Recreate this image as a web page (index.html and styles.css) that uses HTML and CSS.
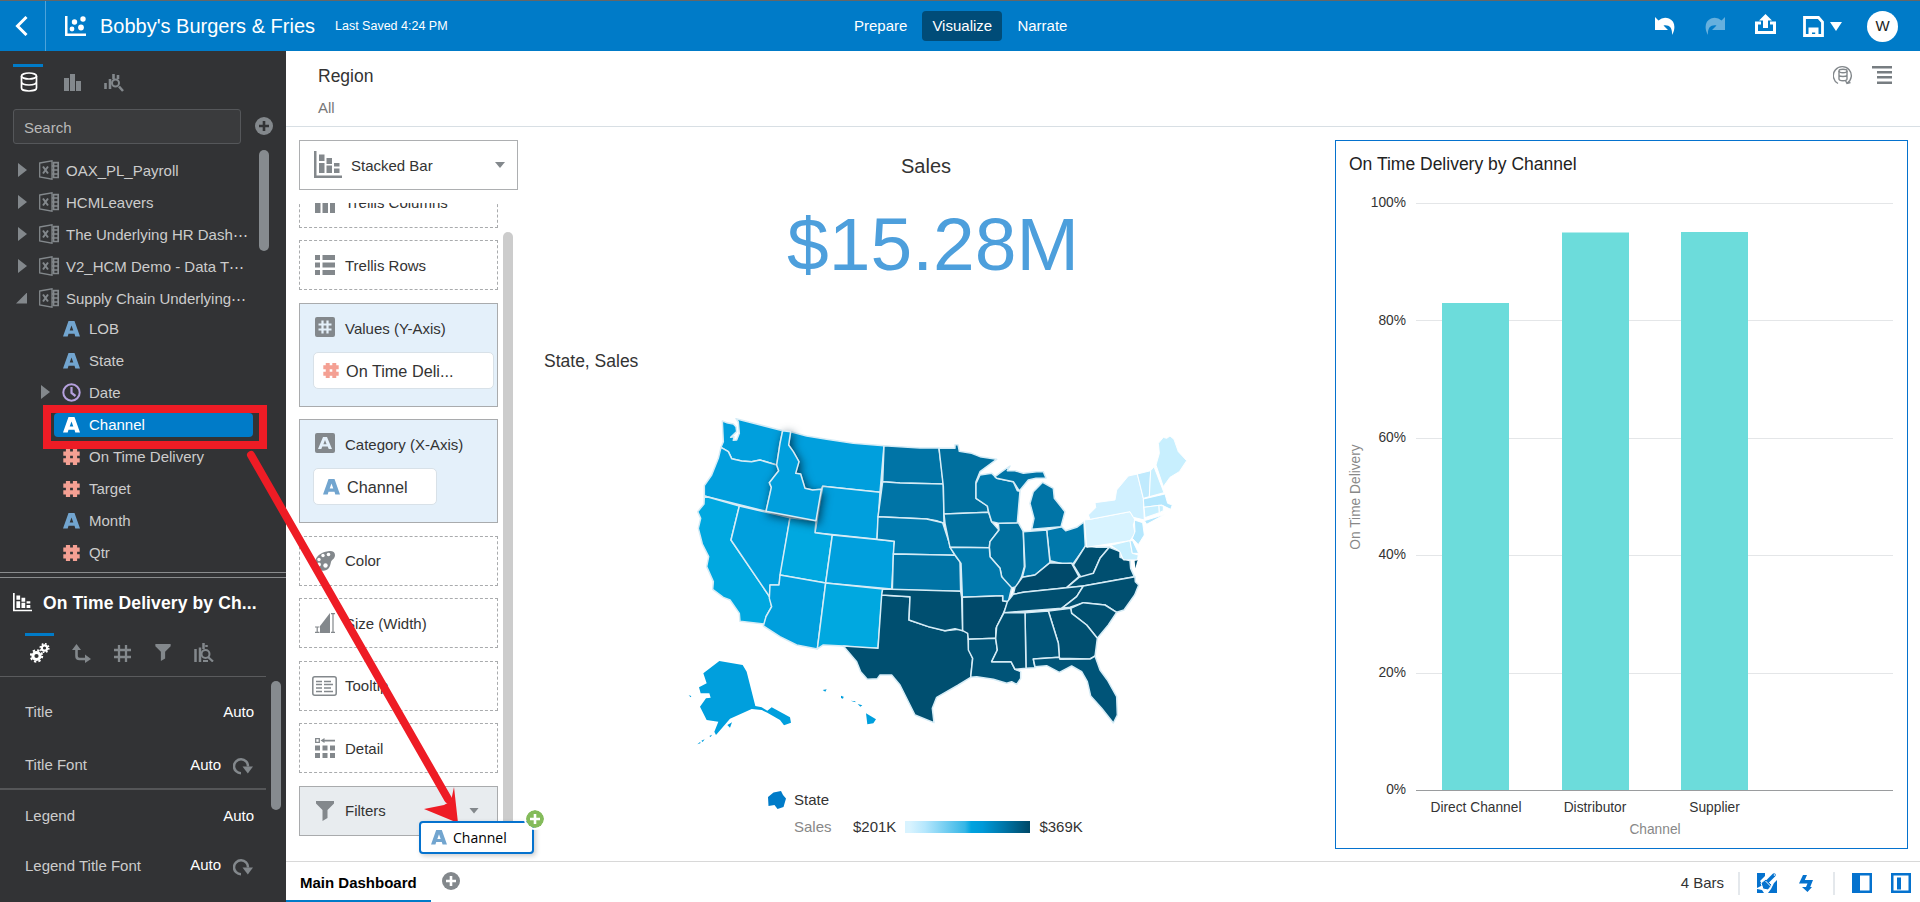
FILE: index.html
```
<!DOCTYPE html>
<html lang="en">
<head>
<meta charset="utf-8">
<title>Bobby's Burgers &amp; Fries</title>
<link rel="stylesheet" href="styles.css">
</head>
<body>
<svg class="defs" width="0" height="0" aria-hidden="true">
  <symbol id="excel" viewBox="0 0 20 20"><path d="M.7 3 13 .8v18.4L.7 17z" fill="none" stroke="#83888c" stroke-width="1.3"/><path d="M4 6.500l5 7M9 6.500l-5 7" stroke="#83888c" stroke-width="2"/><path d="M13.500 2.700h5.700v14.800h-5.700M13 6h6M13 10h6M13 14h6M14.500 2.500v15" fill="none" stroke="#83888c" stroke-width="1.700"/></symbol>
  <symbol id="attr" viewBox="0 0 17 16"><path fill-rule="evenodd" fill="currentColor" d="M5.500 0h6L17 15.500h-4.700l-.8-2.700h-6l-.8 2.700H0zM8.500 4.500 6.700 9.600h3.600z"/></symbol>
  <symbol id="hash" viewBox="0 0 17 16"><path stroke="currentColor" stroke-width="4.200" d="M5 0v16M12 0v16M.3 4.600h16.400M.3 11.400h16.400"/></symbol>
  <symbol id="stack" viewBox="0 0 28 28"><path fill="currentColor" d="M0 0h2.500v24.500H28V27H0zM5 3.500h5.500V10H5zM5 12h5.500v10H5zM12.500 7h5.500v6h-5.500zM12.500 14.500h5.500V22h-5.500zM20 12h5.500v3.500H20zM20 17.500h5.500V22H20z"/></symbol>
  <symbol id="plus" viewBox="0 0 18 18"><circle cx="9" cy="9" r="9" fill="currentColor"/><path class="plus-mark" d="M9 4v10M4 9h10" stroke-width="2.600"/></symbol>
  <symbol id="funnel" viewBox="0 0 18 20"><path fill="currentColor" d="M0 0h18v2.500L11.500 9v8L6.500 20V9L0 2.500z"/></symbol>
  <symbol id="redo-circle" viewBox="0 0 20 17"><path d="M8 15.300A7 7 0 1 1 15 8.500" fill="none" stroke="#83888c" stroke-width="2.500"/><path d="M9.500 8.500H20L14.800 15.500z" fill="#83888c"/></symbol>
  <symbol id="insight" viewBox="0 0 20 19"><path d="M1.500 6v13M6 4.500V19M9.500 0v6M12.500 2v2M9 18.200h5" stroke="currentColor" stroke-width="2.500"/><circle cx="11.500" cy="11" r="4" fill="none" stroke="currentColor" stroke-width="2"/><path d="m14 14 5 4.500" stroke="currentColor" stroke-width="2.300"/></symbol>
</svg>

<header class="topbar">
  <div class="back"><svg width="14" height="20" viewBox="0 0 14 20"><path d="M11.500 1 2.500 10l9 9" fill="none" stroke="#fff" stroke-width="3"/></svg></div>
  <svg class="logo" width="21" height="20" viewBox="0 0 21 20" fill="#fff"><path d="M0 0h2.500v17.500H21V20H0z"/><circle cx="7" cy="13" r="2.400"/><circle cx="9.500" cy="6" r="2.700"/><circle cx="16" cy="11.500" r="2.900"/><circle cx="18" cy="3" r="2.700"/></svg>
  <h1 class="project">Bobby's Burgers &amp; Fries</h1>
  <span class="saved">Last Saved 4:24 PM</span>
  <nav class="modes"><a class="mode">Prepare</a><a class="mode active">Visualize</a><a class="mode">Narrate</a></nav>
  <div class="actions">
    <svg class="undo" width="20" height="18" viewBox="0 0 20 18"><path d="M0 0 3.500 3.500Q8-.5 14 1.500C20 4 21 11 17 18 17.500 11 14.500 7.500 8.500 8.500L13 13H0z" fill="#fff"/></svg>
    <svg class="redo" width="20" height="18" viewBox="0 0 20 18"><path d="M20 0 16.500 3.500Q12-.5 6 1.500C0 4-1 11 3 18 2.500 11 5.500 7.500 11.500 8.500L7 13h13z" fill="#66b0de"/></svg>
    <svg class="export" width="21" height="20" viewBox="0 0 21 20"><path d="M6 9H1.500v9.500h18V9H15" fill="none" stroke="#fff" stroke-width="3"/><path d="M10.500 0 17 6.500h-4V14H8V6.500H4z" fill="#fff"/></svg>
    <svg class="save" width="21" height="21" viewBox="0 0 21 21"><path d="M1.500 1.500h14l4 4.500v13.500h-18z" fill="none" stroke="#fff" stroke-width="2.800"/><path d="M5.500 11.500h10V20h-3.300v-3.500H9V20H5.500z" fill="#fff"/></svg>
    <svg class="caret" width="12" height="9" viewBox="0 0 12 9"><path d="M0 0h12L6 9z" fill="#fff"/></svg>
    <span class="avatar">W</span>
  </div>
</header>

<div class="shell">
  <aside class="side">
    <div class="side-tabs">
      <span class="side-tab on"><svg width="18" height="20" viewBox="0 0 18 20" fill="none" stroke="#fff" stroke-width="1.700"><ellipse cx="9" cy="4" rx="7.500" ry="3"/><path d="M1.500 4v12c0 1.700 3.400 3 7.500 3s7.500-1.300 7.500-3V4M1.500 9.500c0 2.400 3.400 3.500 7.500 3.500s7.500-1.100 7.500-3.500"/></svg></span>
      <svg class="tab-bars" width="17" height="17" viewBox="0 0 17 17"><path fill="#83888c" d="M0 4h5v13H0zM6 0h5v17H6zM12 7h5v10h-5z"/></svg>
      <svg class="tab-insight" width="20" height="18" viewBox="0 0 20 18" fill="none" stroke="#83888c"><path stroke-width="2.600" d="M1.500 9v6M6 5v10M9.500 0v5M14 1v4M15 12.500l4 4.500"/><circle cx="11.500" cy="9" r="3.500" stroke-width="2"/></svg>
    </div>
    <div class="search-row"><div class="search">Search</div><svg class="add-dark" width="18" height="18"><use href="#plus"/></svg></div>
    <div class="tree-wrap">
      <div class="tree">
        <div class="row"><i class="tri"></i><svg width="20" height="20"><use href="#excel"/></svg><span>OAX_PL_Payroll</span></div>
        <div class="row"><i class="tri"></i><svg width="20" height="20"><use href="#excel"/></svg><span>HCMLeavers</span></div>
        <div class="row"><i class="tri"></i><svg width="20" height="20"><use href="#excel"/></svg><span>The Underlying HR Dash⋯</span></div>
        <div class="row"><i class="tri"></i><svg width="20" height="20"><use href="#excel"/></svg><span>V2_HCM Demo - Data T⋯</span></div>
        <div class="row"><i class="tri open"></i><svg width="20" height="20"><use href="#excel"/></svg><span>Supply Chain Underlying⋯</span></div>
        <div class="kids">
          <div class="kid"><svg class="blue" width="17" height="16"><use href="#attr"/></svg><span>LOB</span></div>
          <div class="kid"><svg class="blue" width="17" height="16"><use href="#attr"/></svg><span>State</span></div>
          <div class="kid date"><i class="tri"></i><svg width="19" height="19" viewBox="0 0 19 19" fill="none" stroke="#b5a1de" stroke-width="2"><circle cx="9.500" cy="9.500" r="8.200"/><path d="M9.500 4v6l4 3" stroke-width="2.200"/></svg><span>Date</span></div>
          <div class="kid picked"><svg width="17" height="16"><use href="#attr"/></svg><span>Channel</span></div>
          <div class="kid"><svg class="pink" width="17" height="16"><use href="#hash"/></svg><span>On Time Delivery</span></div>
          <div class="kid"><svg class="pink" width="17" height="16"><use href="#hash"/></svg><span>Target</span></div>
          <div class="kid"><svg class="blue" width="17" height="16"><use href="#attr"/></svg><span>Month</span></div>
          <div class="kid"><svg class="pink" width="17" height="16"><use href="#hash"/></svg><span>Qtr</span></div>
        </div>
      </div>
      <div class="thumb tree-thumb"></div>
    </div>
    <div class="splitter"></div>
    <div class="viz-name"><svg width="19" height="19"><use href="#stack"/></svg><b>On Time Delivery by Ch...</b></div>
    <div class="prop-tabs">
      <span class="prop-tab on"><svg width="20" height="20" viewBox="0 0 20 20" fill="none" stroke="#fff"><circle cx="6.500" cy="13" r="3.600" stroke-width="3"/><circle cx="6.500" cy="13" r="5.700" stroke-width="2" stroke-dasharray="2.300 2.180"/><circle cx="14.500" cy="5" r="2.700" stroke-width="2.200"/><circle cx="14.500" cy="5" r="4.300" stroke-width="1.600" stroke-dasharray="1.700 1.670"/></svg></span>
      <svg class="p-axis" width="19" height="19" viewBox="0 0 19 19"><path d="M4.500 4v8q0 3 3 3H14" fill="none" stroke="#83888c" stroke-width="2.600"/><path d="M0 6 4.500 0 9 6zM13 10.500l6 4.500-6 4z" fill="#83888c"/></svg>
      <svg class="p-hash" width="17" height="17" viewBox="0 0 17 17"><path d="M5 0v17M12 0v17M0 5h17M0 12h17" stroke="#83888c" stroke-width="2.300"/></svg>
      <svg class="p-funnel" width="16" height="17"><use href="#funnel"/></svg>
      <svg class="p-insight" width="20" height="19"><use href="#insight"/></svg>
    </div>
    <div class="props-wrap">
      <div class="props">
        <div class="prop p1"><span>Title</span><em>Auto</em></div>
        <div class="prop p2"><span>Title Font</span><em>Auto</em><svg width="20" height="17"><use href="#redo-circle"/></svg></div>
        <div class="prop p3"><span>Legend</span><em>Auto</em></div>
        <div class="prop p4"><span>Legend Title Font</span><em>Auto</em><svg width="20" height="17"><use href="#redo-circle"/></svg></div>
      </div>
      <div class="thumb prop-thumb"></div>
    </div>
  </aside>

  <main class="main">
    <section class="filterbar">
      <div><div class="f-name">Region</div><div class="f-val">All</div></div>
      <div class="f-icons">
        <svg width="20" height="20" viewBox="0 0 20 20" fill="none" stroke="#83888c" stroke-width="1.400"><path d="M5 18.500a9 9 0 1 1 9-.2"/><path d="M12.500 15.500 14 18.500l3.500-1"/><ellipse cx="10" cy="6" rx="4" ry="1.700"/><path d="M6 6v8c0 2.300 8 2.300 8 0V6M6 10c0 2 8 2 8 0"/></svg>
        <svg width="20" height="18" viewBox="0 0 20 18"><path fill="#777d81" d="M0 0h20v2.500H0zM5 5h15v2.500H5zM5 10h15v2.500H5zM5 15.500h15V18H5z"/></svg>
      </div>
    </section>

    <section class="work">
      <div class="grammar">
        <div class="picker"><svg width="28" height="28"><use href="#stack"/></svg><span>Stacked Bar</span><i class="down"></i></div>
        <div class="zones">
          <div class="zone-list">
            <div class="zone"><svg class="cols" width="20" height="20" viewBox="0 0 20 20"><path fill="#83888c" d="M0 0h5.500v5H0zM7.500 0H13v5H7.500zM15 0h5v5h-5zM0 7h5.500v13H0zM7.500 7H13v13H7.500zM15 7h5v13h-5z"/></svg><span>Trellis Columns</span></div>
            <div class="zone"><svg width="20" height="20" viewBox="0 0 20 20"><path fill="#83888c" d="M0 0h5v5H0zM7.500 0H20v5H7.500zM0 7.500h5v5H0zM7.500 7.500H20v5H7.500zM0 15h5v5H0zM7.500 15H20v5H7.500z"/></svg><span>Trellis Rows</span></div>
            <div class="zone full"><div class="z-head"><svg width="20" height="20" viewBox="0 0 20 20"><rect width="20" height="20" rx="2" fill="#83888c"/><path d="M7.500 3.500v13M12.500 3.500v13M3.500 7.500h13M3.500 12.500h13" stroke="#e4f0fa" stroke-width="2.200"/></svg><span>Values (Y-Axis)</span></div>
              <div class="pill wide"><svg class="pink" width="16" height="15"><use href="#hash"/></svg><span>On Time Deli...</span></div></div>
            <div class="zone full"><div class="z-head"><svg width="20" height="20" viewBox="0 0 20 20"><rect width="20" height="20" rx="2" fill="#83888c"/><path fill-rule="evenodd" fill="#e4f0fa" d="M8 4h4l5 12h-3.300l-1-2.500H7.300l-1 2.500H3zM10 7l-1.600 4.300h3.200z"/></svg><span>Category (X-Axis)</span></div>
              <div class="pill"><svg class="blue" width="17" height="16"><use href="#attr"/></svg><span>Channel</span></div></div>
            <div class="zone"><svg width="20" height="20" viewBox="0 0 20 20"><path fill="#83888c" d="M13 .3C17-.4 20 .7 20 4c0 4-3 4-4 7-1 5-2.500 8.700-8 8.700C3 19.700 0 17 0 12 0 5.500 6 1.300 13 .3z"/><g fill="#fff"><circle cx="13.500" cy="3.500" r="1.800"/><circle cx="8" cy="4.500" r="1.700"/><circle cx="4" cy="8.500" r="1.700"/><circle cx="4" cy="13.500" r="1.900"/><circle cx="10.500" cy="14.500" r="2.200"/></g></svg><span>Color</span></div>
            <div class="zone"><svg width="20" height="20" viewBox="0 0 20 20"><path fill="#83888c" d="M5 20v-7L15 0v20z"/><path d="M0 14h4.500M0 19.300h4.500M2.200 14v5M16 .7h4M16 19.300h4M18 1v18" stroke="#83888c" stroke-width="1.200"/></svg><span>Size (Width)</span></div>
            <div class="zone"><svg class="tip-ico" width="25" height="20" viewBox="0 0 25 20" fill="none" stroke="#83888c"><rect x=".8" y=".8" width="23.400" height="18.400" rx="2" stroke-width="1.500"/><path stroke-width="1.400" d="M4 5.500h6M4 8.500h6M4 12h6M4 15.500h6M12 5.500h7M12 8.500h9M12 12h7M12 15.500h9"/></svg><span>Tooltip</span></div>
            <div class="zone"><svg width="20" height="20" viewBox="0 0 20 20"><path fill="#83888c" d="M0 7.500h5v5H0zM7.500 7.500h5v5h-5zM15 7.500h5v5h-5zM0 15h5v5H0zM7.500 15h5v5h-5zM15 15h5v5h-5zM5.500 2.500 9.500 0v1.700H20v1.700H9.500V5z"/><path d="M.7.700h3.600v3.600H.7z" fill="none" stroke="#83888c" stroke-width="1.300"/></svg><span>Detail</span></div>
            <div class="zone filters"><svg class="grey" width="20" height="20"><use href="#funnel"/></svg><span>Filters</span><i class="down"></i></div>
          </div>
          <div class="zone-thumb"></div>
        </div>
      </div>

      <div class="center">
        <div class="kpi-name">Sales</div>
        <div class="kpi">$15.28M</div>
        <div class="map-name">State, Sales</div>
        <svg class="map" width="520" height="350" viewBox="0 0 520 350">
          <g transform="scale(.33333)" stroke="#d6ecf6" stroke-width="4.500" stroke-linejoin="round" fill="#009fdd">
            <path d="M127 63 L140 68 L160 72 L168 80 L170 95 L152 112 L162 110 L160 121 L170 120 L178 100 L175 66 L168 56 L308 92 L300 130 L290 195 L240 180 L215 185 L185 183 L155 176 L145 155 L123 142 L130 125Z"/>
            <path d="M123 142 L145 155 L155 176 L185 183 L215 185 L240 180 L290 195 L296 212 L268 248 L274 262 L258 334 L73 288 L73 257 L95 225 L115 175Z"/>
            <path d="M332 95 L380 108 L440 118 L520 130 L612 137 L600 277 L428 259 L424 268 L398 270 L375 265 L362 222 L347 220 L357 185 L340 155 L326 135Z"/>
            <path d="M428 259 L600 277 L591 418 L405 398Z"/>
            <path fill="#00a8e0" d="M73 288 L178 318 L153 420 L270 592 L275 620 L258 650 L255 672 L180 664 L178 640 L150 600 L130 592 L98 568 L100 545 L80 500 L86 470 L67 432 L55 385 L62 355 L53 335 L72 312Z"/>
            <path d="M178 318 L330 353 L297 555 L270 555 L270 592 L153 420Z"/>
            <path fill="#00a8e0" d="M330 353 L408 362 L405 398 L457 405 L437 549 L300 525Z"/>
            <path d="M457 405 L643 424 L635 567 L437 549Z"/>
            <path d="M300 525 L437 549 L412 747 L350 735 L300 710 L250 678 L258 650 L275 620 L268 595 L270 555 L297 555Z"/>
            <path fill="#00a8e0" d="M437 549 L608 567 L594 745 L540 743 L490 738 L430 735 L412 747Z"/>
            <g fill="#0074a6">
              <path d="M612 137 L720 144 L777 144 L785 205 L790 252 L660 249 L608 245Z"/>
              <path d="M608 245 L660 249 L790 252 L792 370 L770 362 L740 357 L594 350Z"/>
              <path fill="#007aae" d="M594 350 L740 357 L788 368 L805 420 L812 442 L825 466 L640 462 L643 424 L591 418Z"/>
              <path d="M640 462 L825 466 L840 485 L842 574 L637 570Z"/>
            </g>
            <g fill="#004f70">
              <path d="M605 585 L690 590 L687 660 L740 678 L765 684 L795 692 L850 686 L864 700 L866 745 L878 775 L872 832 L835 855 L770 892 L757 925 L762 968 L705 945 L690 915 L675 885 L660 855 L635 825 L600 825 L592 836 L562 838 L542 815 L530 785 L490 738 L594 745Z"/>
              <path d="M608 567 L842 574 L845 592 L848 692 L825 686 L795 692 L745 680 L687 660 L690 590 L605 585Z"/>
            </g>
            <g stroke="none" fill="#009fdd">
              <path d="M118 783 L188 795 L200 815 L226 918 L245 922 L262 932 L275 922 L330 952 L333 968 L312 976 L300 960 L262 938 L245 930 L215 927 L150 956 L108 1005 L103 995 L115 965 L80 960 L60 920 L78 895 L92 893 L88 880 L62 880 L57 862 L80 850 L70 820Z"/>
              <path d="M558 940 L588 958 L580 970 L562 973ZM483 887l8 3-2 6-6-2zM428 870l12-2-4 7zM533 912l14 4-6 4zM512 902l14 2v3zM142 975l14-8-6 16zM88 1008l8-4-4 7zM52 1033l9-8v5zM64 1022l10-4-6 8zM26 886l8 2-2 4z"/>
            </g>
            <path class="lifted" fill="#009fdd" d="M308 92 L332 95 L326 135 L340 155 L357 185 L347 220 L362 222 L375 265 L398 270 L424 268 L408 362 L258 334 L274 262 L268 248 L296 212 L290 195 L300 130Z"/>
          </g>
          <g transform="translate(220 20) scale(.33333)" stroke="#d6ecf6" stroke-width="4.500" stroke-linejoin="round">
            <g fill="#006f9e">
              <path d="M117 85 L165 85 L165 74 L174 74 L178 94 L215 100 L240 110 L290 118 L240 155 L228 185 L228 235 L262 258 L266 277 L132 282 L130 200Z"/>
              <path d="M132 282 L266 277 L275 305 L297 330 L270 365 L268 383 L150 382 L135 310Z"/>
              <path d="M295 310 L355 308 L370 335 L373 440 L365 470 L350 500 L330 505 L305 470 L300 445 L270 410 L268 383 L270 365 L297 330Z"/>
            </g>
            <g fill="#0078ab">
              <path d="M150 382 L268 383 L270 410 L300 445 L305 470 L335 503 L325 545 L308 543 L308 527 L187 532 L183 430 L165 405Z"/>
              <path d="M240 165 L275 160 L290 175 L340 185 L352 212 L360 213 L352 308 L295 310 L275 305 L266 277 L262 258 L228 235 L228 190Z"/>
              <path d="M440 330 L485 320 L497 332 L530 322 L552 306 L556 380 L520 430 L490 432 L450 422Z"/>
            </g>
            <g fill="#0074a6">
              <path d="M285 170 L305 155 L330 138 L322 152 L345 152 L370 160 L410 155 L430 155 L438 174 L408 175 L385 180 L358 213 L340 185 L290 175Z"/>
              <path d="M428 187 L460 205 L463 235 L495 275 L483 320 L395 328 L402 295 L390 250 L400 215Z"/>
              <path d="M370 335 L440 330 L450 428 L405 465 L367 472 L375 440Z"/>
            </g>
            <g fill="#004f70">
              <path fill="#00496a" d="M187 532 L308 527 L308 543 L325 545 L310 580 L288 625 L287 655 L205 658 L203 640 L188 632Z"/>
              <path fill="#005478" d="M205 658 L287 655 L292 690 L275 725 L333 725 L345 748 L362 755 L362 775 L350 793 L335 785 L320 790 L280 778 L230 770 L212 772 L218 715 L205 690Z"/>
              <path fill="#00496a" d="M340 523 L345 502 L367 472 L405 465 L450 428 L480 430 L515 430 L537 470 L500 503 L370 517Z"/>
              <path d="M556 378 L590 382 L628 382 L600 415 L580 460 L545 475 L520 435Z"/>
              <path d="M628 382 L660 395 L660 412 L690 422 L692 445 L703 470 L550 498 L500 503 L537 472 L580 460 L600 415Z"/>
              <path stroke="none" d="M704 422l9-3-7 26z"/>
              <path d="M322 545 L340 523 L370 517 L500 503 L550 498 L530 530 L485 565 L312 578Z"/>
              <path d="M550 498 L705 470 L706 485 L716 495 L704 525 L672 570 L650 577 L615 555 L550 548 L510 562 L485 565 L530 530Z"/>
              <path d="M512 565 L550 548 L615 555 L650 577 L625 615 L592 655 L560 615 L515 580Z"/>
              <path d="M445 573 L512 565 L515 580 L560 615 L592 655 L585 710 L570 717 L478 715 L475 670Z"/>
              <path fill="#005478" d="M375 578 L445 573 L475 670 L478 712 L400 717 L405 743 L378 745Z"/>
              <path d="M312 578 L375 578 L378 745 L345 748 L333 725 L275 725 L292 690 L287 655 L290 620Z"/>
              <path fill="#005478" d="M400 717 L478 712 L480 718 L570 717 L585 708 L600 750 L622 780 L650 830 L652 885 L640 909 L605 865 L572 828 L562 785 L545 755 L515 738 L478 757 L440 737 L405 740Z"/>
            </g>
            <g fill="#c8effe" stroke="#fff" stroke-width="3">
              <path fill="#d8f3ff" d="M553 300 L570 298 L690 275 L705 300 L700 315 L705 340 L690 362 L560 382Z"/>
              <path fill="#d0f0ff" d="M565 285 L587 263 L585 248 L645 240 L650 210 L685 168 L712 162 L730 235 L733 300 L700 292 L690 275 L570 298Z"/>
              <path fill="#c0eafd" d="M712 162 L752 152 L748 230 L730 235Z"/><path d="M752 152 L762 140 L792 218 L748 230Z"/>
              <path d="M768 135 L778 100 L775 70 L790 52 L800 55 L810 48 L822 58 L835 95 L860 122 L838 155 L810 172 L790 200Z"/>
              <path fill="#b5e7fd" d="M730 237 L795 222 L803 250 L817 255 L812 268 L785 255 L732 262Z"/><path d="M732 262 L777 256 L778 278 L735 293Z"/>
              <path d="M777 256 L790 258 L790 272 L778 278Z"/><path fill="#b5e7fd" d="M733 302 L795 283 L740 313Z"/>
              <path fill="#b5e7fd" d="M703 300 L728 308 L733 345 L715 374 L697 355 L705 335Z"/>
              <path d="M632 376 L690 362 L697 400 L715 405 L712 420 L670 420 L660 395Z"/><path fill="#b5e7fd" d="M690 362 L698 362 L716 400 L697 400Z"/>
            </g>
          </g>
        </svg>
        <div class="legend">
          <svg width="18" height="18" viewBox="0 0 18 18"><path d="M0 6 5.500 1.500 13 0l2 4 3 3.500L15.500 16l-6 2-3-4-6 1z" fill="#007bc8"/></svg><span>State</span>
          <span class="muted">Sales</span><div class="scale"><span>$201K</span><i class="ramp"></i><span>$369K</span></div>
        </div>
      </div>

      <div class="chart">
        <div class="chart-name">On Time Delivery by Channel</div>
        <svg class="plot" width="571" height="670" viewBox="1336 180 571 670">
          <path d="M1416 203.500h477M1416 320.500h477M1416 438.500h477M1416 555.500h477M1416 673.500h477" stroke="#e4e6e8"/>
          <path d="M1442 303h67v487h-67zM1562 232.500h67V790h-67zM1681 232h67v558h-67z" fill="#6cdcdb"/>
          <path d="M1416 790.500h477" stroke="#9a9c9e"/>
          <g text-anchor="end"><text x="1406" y="207">100%</text><text x="1406" y="325">80%</text><text x="1406" y="442">60%</text><text x="1406" y="559">40%</text><text x="1406" y="677">20%</text><text x="1406" y="794">0%</text></g>
          <g text-anchor="middle"><text x="1476" y="812">Direct Channel</text><text x="1595" y="812">Distributor</text><text x="1714.500" y="812">Supplier</text><text class="axis" x="1655" y="834">Channel</text><text class="axis" transform="translate(1360 497) rotate(-90)">On Time Delivery</text></g>
        </svg>
      </div>
    </section>

    <footer class="foot">
      <div class="page-tab">Main Dashboard</div>
      <svg class="add-light" width="18" height="18"><use href="#plus"/></svg>
      <span class="count">4 Bars</span><i class="bar"></i>
      <svg class="brush" width="20" height="20" viewBox="0 0 20 20"><path fill="#0572ce" d="M0 0h8v3L3 8l3 4-6 3zM20 7v13h-9l3-4 3-6zM0 16l5 1 2 3H0z"/><path d="m4 10 5-4 6 6-4 5-5-1z" fill="#0572ce" stroke="#fff"/><path d="m11 8 6-6" stroke="#0572ce" stroke-width="3.500" stroke-linecap="round"/><path d="m8.500 8 5 5" stroke="#fff"/><circle cx="17.500" cy="2" r=".8" fill="#fff"/></svg>
      <svg class="bolt" width="14" height="17" viewBox="0 0 14 17"><path fill="#0572ce" d="M4 0h4L5.800 5H14l-2.800 7H13l-4.500 5L3 12h4l1.500-3.500H0z"/></svg>
      <i class="bar b2"></i>
      <svg class="pane1" width="20" height="20" viewBox="0 0 20 20"><path fill="#0572ce" fill-rule="evenodd" d="M0 0h20v20H0zM8 2.500v15h9.500v-15z"/></svg>
      <svg width="20" height="20" viewBox="0 0 20 20"><path fill="#0572ce" fill-rule="evenodd" d="M0 0h20v20H0zM2.500 2.500v15h15v-15zM6 4.500h4v12H6z"/></svg>
    </footer>
  </main>
</div>

<div class="callout"></div>
<svg class="arrow" width="1920" height="902" viewBox="0 0 1920 902"><path d="m251 455 197 344" stroke="#ee1c25" stroke-width="8" stroke-linecap="round"/><path d="M458 823 424 809 444 805 451 801 454 787z" fill="#ee1c25"/></svg>
<div class="drag"><svg class="blue" width="16" height="15"><use href="#attr"/></svg><span>Channel</span><svg class="drag-add" width="18" height="18"><use href="#plus"/></svg></div>
</body>
</html>
```
FILE: styles.css
```
* { box-sizing: border-box; }
body { margin: 0; width: 1920px; height: 902px; overflow: hidden; background: #fff; color: #333; font: 15px/20px "Liberation Sans", Arial, sans-serif; display: flex; flex-direction: column; }
svg { display: block; flex: none; }
.defs { position: absolute; }
span, b { white-space: nowrap; }
.blue { color: #72a5cf; }
.pink { color: #f4a093; }
.grey { color: #83888c; }

/* top bar */
.topbar { height: 51px; flex: none; border-top: 1px solid #666; background: #007bc8; color: #fff; display: grid; grid-template-columns: 46px 54px 235px 519px auto 1fr; align-items: center; }
.back { height: 50px; border-right: 1px solid #4da3da; display: flex; align-items: center; padding-left: 15px; }
.logo { margin-left: 19px; }
.project { font-size: 20px; font-weight: 400; margin: 0; line-height: 24px; white-space: nowrap; }
.saved { font-size: 12.5px; }
.modes { display: flex; height: 30px; line-height: 30px; margin-left: -15px; }
.mode { padding: 0 15px; }
.mode.active { background: #004c78; border-radius: 4px; padding: 0 10px; width: 80px; }
.actions { display: flex; align-items: center; justify-content: flex-end; padding-right: 22px; }
.redo { margin-left: 30px; }
.export { margin-left: 30px; margin-top: -4px; }
.save { margin-left: 27px; }
.caret { margin-left: 6px; }
.avatar { margin-left: 25px; width: 31px; height: 31px; border-radius: 50%; background: #fff; color: #222; text-align: center; line-height: 30px; }

.shell { flex: 1; display: flex; min-height: 0; }

/* left panel */
.side { width: 286px; background: #323335; color: #ccc; display: flex; flex-direction: column; flex: none; }
.side-tabs { height: 58px; padding: 13px 0 0 13px; display: flex; align-items: flex-start; }
.side-tab { width: 30px; border-top: 3px solid #007bc8; padding: 5px 0 0 7px; }
.tab-bars { margin: 10px 0 0 21px; }
.tab-insight { margin: 10px 0 0 23px; }
.search-row { display: flex; align-items: center; padding-left: 13px; height: 35px; }
.search { width: 228px; height: 35px; border: 1px solid #55575a; border-radius: 3px; background: #3a3b3d; padding-left: 10px; line-height: 36px; color: #b8b8b8; }
.add-dark { margin: -1px 0 0 14px; color: #83888c; --mark: #323335; }
.plus-mark { stroke: var(--mark, #fff); }
.tree-wrap { display: flex; height: 428px; }
.tree { width: 259px; padding-top: 10px; }
.row { height: 32px; display: flex; align-items: center; padding-left: 18px; }
.row svg { margin-left: 12px; }
.row span { margin-left: 7px; margin-top: 2px; }
.tri { width: 9px; height: 14px; background: #83888c; clip-path: polygon(0 0, 100% 50%, 0 100%); flex: none; }
.tri.open { width: 11px; height: 11px; clip-path: polygon(100% 0, 100% 100%, 0 100%); margin-left: -2px; }
.kids { margin-top: -1px; }
.kid { height: 24px; margin: 4px 0 8px 54px; display: flex; align-items: center; padding-left: 9px; }
.kid svg { margin-top: -1px; }
.kid span { margin: -1px 0 0 9px; }
.kid.date { padding-left: 0; margin-left: 41px; }
.kid.date svg { margin-left: 12px; }
.kid.date span { margin-left: 8px; }
.kid .tri { margin-top: -2px; }
.picked { width: 199px; background: #007bc8; color: #fff; border-radius: 4px; }
.thumb { width: 10px; border-radius: 5px; background: #868b8f; }
.tree-thumb { height: 101px; margin-top: 6px; }
.splitter { height: 6px; border-top: 1px solid #8a8c8e; border-bottom: 1px solid #8a8c8e; }
.viz-name { height: 55px; padding: 1px 0 7px 13px; display: flex; align-items: center; color: #fff; font-size: 17.5px; letter-spacing: .12px; }
.viz-name b { margin-left: 11px; }
.prop-tabs { display: flex; height: 44px; width: 266px; border-bottom: 1px solid #5a5b5d; padding-left: 25px; color: #83888c; align-items: flex-start; }
.prop-tab { width: 29px; border-top: 3px solid #007bc8; padding: 7px 0 0 5px; }
.p-axis { margin: 11px 0 0 18px; }
.p-hash { margin: 12px 0 0 23px; }
.p-funnel { margin: 11px 0 0 24px; }
.p-insight { margin: 10px 0 0 23px; }
.props-wrap { flex: 1; display: flex; }
.props { width: 266px; display: flex; flex-direction: column; }
.prop { display: flex; align-items: center; padding: 0 12px 2px 25px; }
.prop em { font-style: normal; color: #fff; margin-left: auto; }
.prop svg { margin-left: 12px; }
.prop.p2 svg, .prop.p4 svg { margin-right: 1px; margin-top: 3px; }
.prop.p2 em, .prop.p4 em { margin-top: -1px; }
.p1 { height: 71px; }
.prop.p2 { height: 42px; border-bottom: 2px solid #555658; padding-bottom: 6px; }
.p3 { height: 54px; }
.prop.p4 { height: 47px; padding-bottom: 4px; }
.prop-thumb { margin: 4px 0 0 5px; height: 129px; }

/* canvas area */
.main { flex: 1; display: flex; flex-direction: column; }
.filterbar { height: 76px; border-bottom: 1px solid #d8dfe4; display: flex; justify-content: space-between; padding: 13px 28px 0 32px; }
.f-name { font-size: 17.5px; line-height: 24px; }
.f-val { color: #777; margin-top: 10px; }
.f-icons { display: flex; gap: 19px; align-items: flex-start; padding-top: 1px; }
.f-icons svg + svg { margin-top: 1px; }
.work { height: 734px; display: grid; grid-template-columns: 258px 791px 574px; padding-top: 13px; }
.grammar { padding-left: 13px; }
.picker { width: 219px; height: 50px; border: 1px solid #adafb1; display: flex; align-items: center; padding: 0 12px 0 14px; color: #333; }
.picker svg { color: #83888c; }
.picker span { margin: 2px 0 0 9px; }
.down { width: 10px; height: 6px; background: #83888c; clip-path: polygon(0 0, 100% 0, 50% 100%); margin-left: auto; }
.zones { display: flex; margin-top: 13px; height: 633px; overflow: hidden; }
.zone-list { width: 199px; margin-top: -25.5px; display: flex; flex-direction: column; gap: 12.5px; }
.zone { height: 50px; flex: none; border: 1px dashed #a9abad; display: flex; align-items: center; padding-left: 15px; }
.zone > span, .z-head span { margin: 1px 0 0 10px; }
.zone > .tip-ico { margin: 0 -2px 0 -3px; }
.zone.full { height: 104px; border-style: solid; background: #e4f0fa; display: block; padding: 13px 0 0 15px; }
.z-head { display: flex; align-items: center; height: 20px; }
.z-head span { margin-top: 4px; }
.pill { width: 124px; height: 37px; margin: 15px 0 0 -2px; border: 1px solid #d8e1e8; border-radius: 5px; background: #fff; display: flex; align-items: center; padding-left: 9px; font-size: 16.25px; }
.pill.wide { width: 181px; }
.pill span { margin: 1px 0 0 7px; }
.zone.filters { background: #e8ecef; border-style: solid; }
.filters .down { margin-right: 18px; }
.zone-thumb { width: 10px; margin-left: 5px; margin-top: 29px; border-radius: 5px; background: #ccc; }

.center { display: flex; flex-direction: column; }
.kpi-name { font-size: 20px; line-height: 26px; margin: 13px 0 0 357px; }
.kpi { font-size: 75px; line-height: 84px; color: #4d9fdc; margin: 23px 0 0 243px; }
.map-name { font-size: 17.5px; line-height: 24px; margin-top: 63px; }
.map { margin: 27px 0 0 136px; }
.lifted { filter: drop-shadow(6px 9px 14px rgba(0, 30, 50, .8)); }
.legend { margin: 40px 0 0 224px; display: grid; grid-template-columns: 26px 68px auto; row-gap: 7px; align-items: center; width: 330px; }
.legend > svg { grid-column: 1; }
.legend > span { grid-column: 2; }
.muted { color: #888; }
.scale { grid-column: 3; display: flex; align-items: center; margin-left: -9px; }
.ramp { width: 125px; height: 12px; margin: 0 9px; background: linear-gradient(90deg, #d8f3ff 0 4%, #b5e7fd 16%, #36b6e6 48%, #00a3df 53%, #0099d8 62%, #0074a6 80%, #004866); }

.chart { width: 573px; height: 709px; border: 1px solid #0572ce; }
.chart-name { font-size: 17.5px; line-height: 24px; padding: 11px 0 4px 13px; color: #222; }
.plot { font-size: 13.75px; fill: #333; }
.axis { fill: #888; }

.foot { height: 41px; border-top: 1px solid #d8d8d8; display: flex; align-items: center; padding-right: 9px; }
.page-tab { width: 145px; height: 40px; border-bottom: 2px solid #007bc8; padding-left: 14px; line-height: 41px; font-weight: 700; color: #000; white-space: nowrap; }
.add-light { margin: -2px 0 0 11px; color: #83888c; }
.count { margin: 1px 0 0 auto; }
.bar { width: 2px; height: 23px; background: #e4e8ec; margin: 3px 17px 0 14px; }
.brush, .pane1, .pane1 + svg { margin-top: 2px; }
.bolt { margin: 2px 0 0 22px; }
.bar.b2 { margin: 3px 17px 0 20px; }
.pane1 + svg { margin-left: 19px; }

/* annotation overlays */
.callout { position: absolute; left: 43px; top: 405px; width: 224px; height: 44px; border: 8px solid #ee1c25; }
.arrow { position: absolute; left: 0; top: 0; pointer-events: none; }
.drag { position: absolute; left: 419px; top: 821px; width: 115px; height: 33px; border: 2px solid #0572ce; border-radius: 4px; background: #fff; display: flex; align-items: center; padding-left: 10px; color: #000; font: 14px/20px "Open Sans", sans-serif; box-shadow: 2px 2px 5px rgba(0, 0, 0, .2); }
.drag span { margin-left: 6px; }
.drag-add { position: absolute; left: 105px; top: -13px; color: #84bb5b; border-radius: 50%; box-shadow: 0 0 0 2px #fff; }
```
